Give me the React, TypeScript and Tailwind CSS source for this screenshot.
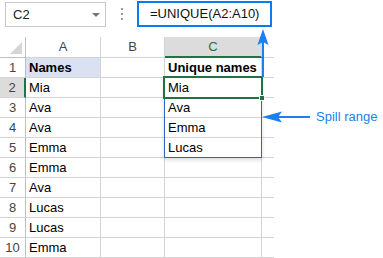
// Excel-style UNIQUE() spill range illustration
import React from 'react';

const rows: [string, string][] = [
  ['Names', 'Unique names'],
  ['Mia', 'Mia'],
  ['Ava', 'Ava'],
  ['Ava', 'Emma'],
  ['Emma', 'Lucas'],
  ['Emma', ''],
  ['Ava', ''],
  ['Lucas', ''],
  ['Lucas', ''],
  ['Emma', ''],
];

const line = 'border-[#d4d4d4]';

// ── Toolbar: name box + formula bar ─────────────────────────────────────────
function FormulaBar() {
  return (
    <div className="flex items-start h-[37px] pt-[1px] pl-[5px]">
      <div className="mt-[1px] h-[25px] w-[101px] border border-[#c8c8c8] flex items-center justify-between pl-[7px] pr-[5px]">
        <span className="text-[13px] text-[#222]">C2</span>
        <span className="w-0 h-0 border-l-[4px] border-r-[4px] border-t-[4px] border-l-transparent border-r-transparent border-t-[#777]" />
      </div>
      <div className="w-[31px] h-[26px] flex flex-col items-center justify-center gap-[3px]">
        <span className="w-[2px] h-[2px] bg-[#999]" />
        <span className="w-[2px] h-[2px] bg-[#999]" />
        <span className="w-[2px] h-[2px] bg-[#999]" />
      </div>
      <div className="h-[26px] w-[135px] border-2 border-[#0a7cf0] flex items-center pl-[11px]">
        <span className="text-[13px] text-[#111]">=UNIQUE(A2:A10)</span>
      </div>
    </div>
  );
}

// ── Sheet grid ──────────────────────────────────────────────────────────────
function Sheet() {
  return (
    <div className="relative">
      <div className="grid grid-cols-[26px_75px_64px_97px_12px] grid-rows-[21px_repeat(10,20px)]">
        {/* header row */}
        <div className="relative border-r border-b border-[#bfbfbf]">
          <span className="absolute right-[3px] bottom-[3px] w-[12px] h-[12px] bg-[#d6d6d6] [clip-path:polygon(100%_0,100%_100%,0_100%)]" />
        </div>
        <div className={`border-r border-b ${line} flex items-center justify-center text-[13px] text-[#444]`}>A</div>
        <div className={`border-r border-b ${line} flex items-center justify-center text-[13px] text-[#444]`}>B</div>
        <div className="border-r border-[#d4d4d4] border-b-2 border-b-[#217346] bg-[#dcdcdc] flex items-center justify-center text-[13px] text-[#217346]">C</div>
        <div className={`border-b ${line}`} />

        {rows.map(([a, c], i) => {
          const n = i + 1;
          const head = n === 1;
          const sel = n === 2;
          return (
            <React.Fragment key={n}>
              <div
                className={`border-b ${line} flex items-center justify-center text-[13px] text-[#444] ${
                  sel ? 'bg-[#dcdcdc] border-r-2 border-r-[#217346]' : 'border-r border-r-[#bfbfbf]'
                }`}
              >
                {n}
              </div>
              <div
                className={`border-r border-b ${line} flex items-center pl-[3px] text-[13px] text-black ${
                  head ? 'bg-[#d9e1f2] font-bold' : ''
                }`}
              >
                {a}
              </div>
              <div className={`border-r border-b ${line}`} />
              <div className={`border-r border-b ${line} flex items-center pl-[3px] text-[13px] text-black ${head ? 'font-bold' : ''}`}>
                {c}
              </div>
              <div className={`border-b ${line}`} />
            </React.Fragment>
          );
        })}
      </div>

      {/* spill range outline */}
      <div className="absolute left-[164px] top-[40px] w-[98px] h-[81px] border border-[#2f64c6] shadow-[0_2px_4px_rgba(0,0,0,0.15)]" />
      {/* active cell */}
      <div className="absolute left-[163px] top-[39px] w-[100px] h-[23px] border-2 border-[#217346]" />
      <div className="absolute left-[259px] top-[58px] w-[6px] h-[6px] bg-[#217346] border border-white" />
    </div>
  );
}

export default function App() {
  return (
    <div className="relative w-[383px] h-[258px] bg-white overflow-hidden font-['Liberation_Sans',Arial,sans-serif]">
      <FormulaBar />
      <Sheet />

      {/* callout arrows */}
      <svg className="absolute inset-0 pointer-events-none" width="383" height="258" viewBox="0 0 383 258">
        <line x1="263" y1="40" x2="263" y2="77" stroke="#1a7ff0" strokeWidth="2" />
        <path d="M263 29 L257.5 45 L263 42 L268.5 45 Z" fill="#1a7ff0" />
        <line x1="278" y1="117" x2="310" y2="117" stroke="#1a7ff0" strokeWidth="2" />
        <path d="M262 117 L282 111.5 L278 117 L282 122.5 Z" fill="#1a7ff0" />
      </svg>
      <span className="absolute left-[316px] top-[108px] text-[13px] leading-[18px] text-[#1e7fe8]">Spill range</span>
    </div>
  );
}
